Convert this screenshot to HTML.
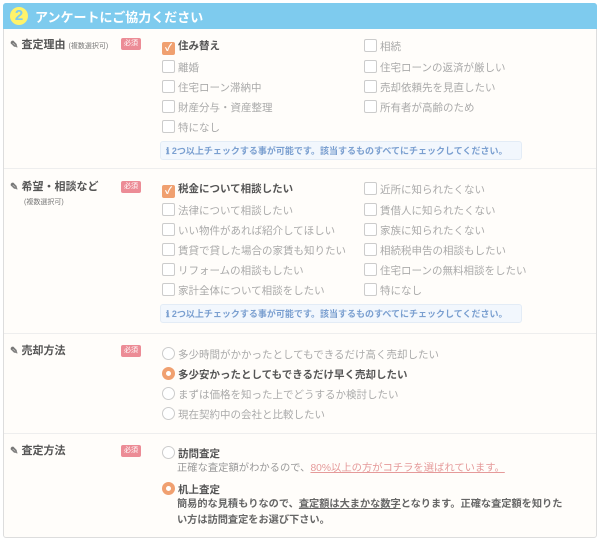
<!DOCTYPE html><html><head><meta charset="utf-8"><style>
body{margin:0;width:600px;height:539px;background:#fff;font-family:"Liberation Sans","Noto Sans CJK JP",sans-serif;position:relative;overflow:hidden}
.box{position:absolute;left:3px;top:3px;width:592px;height:533px;border:1px solid #ddd;border-radius:3px;background:#fffdfa}
.hd{position:absolute;left:3px;top:3px;width:594px;height:26px;background:#7ecbee;border-radius:3px 3px 0 0}
.hd .n{position:absolute;left:7px;top:4px;width:18px;height:18px;border-radius:50%;background:#fff36a;color:#7ecbee;font-weight:bold;font-size:15px;line-height:18px;text-align:center}
.hd .t{position:absolute;left:32px;top:4px;color:#fff;font-size:13px;font-weight:bold}
.a{position:absolute;white-space:nowrap;font-size:10.5px;line-height:14px}
.lb{color:#555;font-weight:bold;font-size:11px}
.lb small{font-size:7px;font-weight:normal;color:#777}
.bd{position:absolute;width:20px;height:12px;background:#ec8c96;color:#fff;font-size:7px;line-height:12px;text-align:center;border-radius:2px}
.c{color:#aaa}
.c:before{content:"";display:inline-block;width:11px;height:11px;border:1px solid #ccc;border-radius:2px;background:#fff;vertical-align:-2px;margin-right:3px}
.ck{color:#555;font-weight:bold}
.ck:before{content:"✓";display:inline-block;width:13px;height:13px;background:#f0a070;border-radius:2px;color:#fff;font-size:10px;line-height:13px;text-align:center;vertical-align:-2px;margin-right:3px}
.r{color:#aaa}
.r:before{content:"";display:inline-block;width:11px;height:11px;border:1px solid #ccc;border-radius:50%;background:#fff;vertical-align:-2px;margin-right:3px}
.rk{color:#555;font-weight:bold}
.rk:before{content:"";display:inline-block;width:5px;height:5px;border:4px solid #f0a070;border-radius:50%;background:#fff;vertical-align:-2px;margin-right:3px}
.nt{position:absolute;left:160px;width:362px;height:19px;background:#f2f7fd;border:1px solid #e3ecf6;border-radius:3px;color:#7a9fd0;font-size:9px;font-weight:bold;line-height:19px;padding-left:5px;box-sizing:border-box;white-space:nowrap;overflow:hidden}
.hr{position:absolute;left:4px;width:592px;height:1px;background:#eee}
.pen{color:#777;font-size:10px}
</style></head><body>
<div class="box"></div>
<div class="hd"><div class="n">2</div><div class="t">アンケートにご協力ください</div></div>

<div class="a lb" style="left:10px;top:38px"><span class="pen">✎</span> 査定理由 <small>(複数選択可)</small></div>
<div class="bd" style="left:121px;top:38px">必須</div>
<div class="a ck" style="left:162px;top:39px">住み替え</div>
<div class="a c" style="left:162px;top:60px">離婚</div>
<div class="a c" style="left:162px;top:80px">住宅ローン滞納中</div>
<div class="a c" style="left:162px;top:100px">財産分与・資産整理</div>
<div class="a c" style="left:162px;top:120px">特になし</div>
<div class="a c" style="left:364px;top:39px">相続</div>
<div class="a c" style="left:364px;top:60px">住宅ローンの返済が厳しい</div>
<div class="a c" style="left:364px;top:80px">売却依頼先を見直したい</div>
<div class="a c" style="left:364px;top:100px">所有者が高齢のため</div>
<div class="nt" style="top:141px">ℹ 2つ以上チェックする事が可能です。該当するものすべてにチェックしてください。</div>
<div class="hr" style="top:168px"></div>

<div class="a lb" style="left:10px;top:180px"><span class="pen">✎</span> 希望・相談など</div>
<div class="a lb" style="left:24px;top:194px"><small>(複数選択可)</small></div>
<div class="bd" style="left:121px;top:181px">必須</div>
<div class="a ck" style="left:162px;top:182px">税金について相談したい</div>
<div class="a c" style="left:162px;top:203px">法律について相談したい</div>
<div class="a c" style="left:162px;top:223px">いい物件があれば紹介してほしい</div>
<div class="a c" style="left:162px;top:243px">賃貸で貸した場合の家賃も知りたい</div>
<div class="a c" style="left:162px;top:263px">リフォームの相談もしたい</div>
<div class="a c" style="left:162px;top:283px">家計全体について相談をしたい</div>
<div class="a c" style="left:364px;top:182px">近所に知られたくない</div>
<div class="a c" style="left:364px;top:203px">賃借人に知られたくない</div>
<div class="a c" style="left:364px;top:223px">家族に知られたくない</div>
<div class="a c" style="left:364px;top:243px">相続税申告の相談もしたい</div>
<div class="a c" style="left:364px;top:263px">住宅ローンの無料相談をしたい</div>
<div class="a c" style="left:364px;top:283px">特になし</div>
<div class="nt" style="top:304px">ℹ 2つ以上チェックする事が可能です。該当するものすべてにチェックしてください。</div>
<div class="hr" style="top:333px"></div>

<div class="a lb" style="left:10px;top:344px"><span class="pen">✎</span> 売却方法</div>
<div class="bd" style="left:121px;top:345px">必須</div>
<div class="a r" style="left:162px;top:347px">多少時間がかかったとしてもできるだけ高く売却したい</div>
<div class="a rk" style="left:162px;top:367px">多少安かったとしてもできるだけ早く売却したい</div>
<div class="a r" style="left:162px;top:387px">まずは価格を知った上でどうするか検討したい</div>
<div class="a r" style="left:162px;top:407px">現在契約中の会社と比較したい</div>
<div class="hr" style="top:433px"></div>

<div class="a lb" style="left:10px;top:444px"><span class="pen">✎</span> 査定方法</div>
<div class="bd" style="left:121px;top:445px">必須</div>
<div class="a r" style="left:162px;top:446px;color:#555;font-weight:bold">訪問査定</div>
<div class="a" style="left:177px;top:462px;color:#999;font-size:10.3px">正確な査定額がわかるので、<span style="color:#e59a9a;text-decoration:underline">80%以上の方がコチラを選ばれています。</span></div>
<div class="a rk" style="left:162px;top:482px">机上査定</div>
<div class="a" style="left:177px;top:498px;color:#666;font-weight:bold;font-size:10.2px">簡易的な見積もりなので、<span style="text-decoration:underline">査定額は大まかな数字</span>となります。正確な査定額を知りた</div>
<div class="a" style="left:177px;top:514px;color:#666;font-weight:bold;font-size:10.2px">い方は訪問査定をお選び下さい。</div>
</body></html>
